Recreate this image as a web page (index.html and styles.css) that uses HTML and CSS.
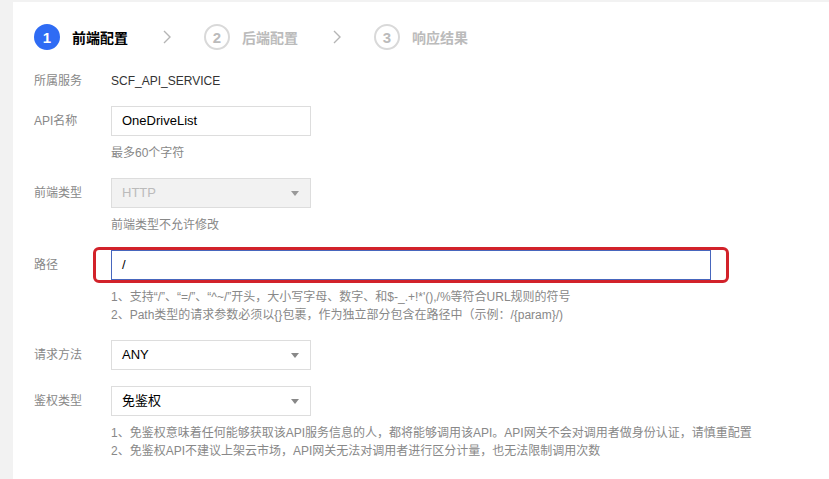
FILE: index.html
```html
<!DOCTYPE html>
<html lang="zh-CN">
<head>
    <meta charset="UTF-8">
    <meta name="viewport" content="width=device-width, initial-scale=1.0">
    <title>创建API - 前端配置</title>
    <link rel="stylesheet" href="styles.css">
</head>
<body>
<div class="panel">
    <div class="steps">
        <div class="step active">
            <span class="step-num">1</span>
            <span class="step-title">前端配置</span>
        </div>
        <svg class="step-arrow" width="8" height="14" viewBox="0 0 8 14"><polyline points="1,1 7,7 1,13" fill="none" stroke="#b5b5b5" stroke-width="1.4"/></svg>
        <div class="step">
            <span class="step-num">2</span>
            <span class="step-title">后端配置</span>
        </div>
        <svg class="step-arrow" width="8" height="14" viewBox="0 0 8 14"><polyline points="1,1 7,7 1,13" fill="none" stroke="#b5b5b5" stroke-width="1.4"/></svg>
        <div class="step">
            <span class="step-num">3</span>
            <span class="step-title">响应结果</span>
        </div>
    </div>

    <div class="form">
        <div class="form-item first">
            <label class="form-label">所属服务</label>
            <div class="form-control">
                <div class="form-text">SCF_API_SERVICE</div>
            </div>
        </div>

        <div class="form-item">
            <label class="form-label">API名称</label>
            <div class="form-control">
                <div class="input">OneDriveList</div>
                <div class="form-hint">最多60个字符</div>
            </div>
        </div>

        <div class="form-item">
            <label class="form-label">前端类型</label>
            <div class="form-control">
                <div class="select disabled">HTTP<span class="caret"></span></div>
                <div class="form-hint">前端类型不允许修改</div>
            </div>
        </div>

        <div class="form-item">
            <label class="form-label">路径</label>
            <div class="form-control">
                <div class="path-wrap">
                    <div class="input wide focus">/</div>
                    <div class="highlight"></div>
                </div>
                <div class="form-hint">
                    <p>1、支持“/”、“=/”、“^~/”开头，大小写字母、数字、和$-_.+!*'(),/%等符合URL规则的符号</p>
                    <p>2、Path类型的请求参数必须以{}包裹，作为独立部分包含在路径中（示例：/{param}/)</p>
                </div>
            </div>
        </div>

        <div class="form-item">
            <label class="form-label">请求方法</label>
            <div class="form-control">
                <div class="select">ANY<span class="caret"></span></div>
            </div>
        </div>

        <div class="form-item">
            <label class="form-label">鉴权类型</label>
            <div class="form-control">
                <div class="select">免鉴权<span class="caret"></span></div>
                <div class="form-hint">
                    <p>1、免鉴权意味着任何能够获取该API服务信息的人，都将能够调用该API。API网关不会对调用者做身份认证，请慎重配置</p>
                    <p>2、免鉴权API不建议上架云市场，API网关无法对调用者进行区分计量，也无法限制调用次数</p>
                </div>
            </div>
        </div>
    </div>
</div>
</body>
</html>
```

FILE: styles.css
```css
* {
    margin: 0;
    padding: 0;
    box-sizing: border-box;
}

body {
    background: #f2f2f2;
    font-family: 'Liberation Sans', 'Noto Sans CJK SC', sans-serif;
    font-size: 12px;
    color: #333;
    min-height: 100vh;
    padding: 2px 0 0 13px;
    overflow: hidden;
}

.panel {
    background: #fff;
    min-height: 477px;
    padding: 22px 21px 0;
}

/* steps */
.steps {
    display: flex;
    align-items: center;
    height: 26px;
}

.step {
    display: flex;
    align-items: center;
}

.step-num {
    width: 26px;
    height: 26px;
    border-radius: 50%;
    border: 2px solid #d9d9d9;
    color: #bbb;
    font-size: 15px;
    font-weight: bold;
    display: flex;
    align-items: center;
    justify-content: center;
}

.step-title {
    margin-left: 12px;
    font-size: 14px;
    font-weight: bold;
    color: #bbb;
}

.step.active .step-num {
    background: #2f6cf4;
    border-color: #2f6cf4;
    color: #fff;
}

.step.active .step-title {
    color: #000;
}

.step-arrow {
    margin: 0 33px 0 35px;
}

/* form */
.form {
    margin-top: 16px;
}

.form-item {
    display: flex;
    margin-bottom: 16px;
}

.form-item.first {
    margin-bottom: 10px;
}

.form-label {
    width: 77px;
    flex-shrink: 0;
    line-height: 30px;
    color: #888;
}

.form-text {
    line-height: 30px;
    color: #333;
}

.input,
.select {
    width: 200px;
    height: 30px;
    border: 1px solid #ddd;
    padding: 0 10px;
    line-height: 28px;
    font-size: 13px;
    color: #000;
    background: #fff;
}

.input.wide {
    width: 600px;
}

.input.focus {
    border-color: #4766bd;
}

.select {
    position: relative;
}

.select.disabled {
    background: #f2f2f2;
    color: #bbb;
}

.caret {
    position: absolute;
    right: 11px;
    top: 12px;
    border-left: 4px solid transparent;
    border-right: 4px solid transparent;
    border-top: 5px solid #888;
}

.select.disabled .caret {
    border-top-color: #999;
}

.path-wrap {
    position: relative;
}

.highlight {
    position: absolute;
    left: -18px;
    right: -18px;
    top: -3px;
    bottom: -3px;
    border: 3px solid #d2222a;
    border-radius: 6px;
    pointer-events: none;
}

.form-hint {
    margin-top: 8px;
    line-height: 18px;
    color: #888;
}
```
